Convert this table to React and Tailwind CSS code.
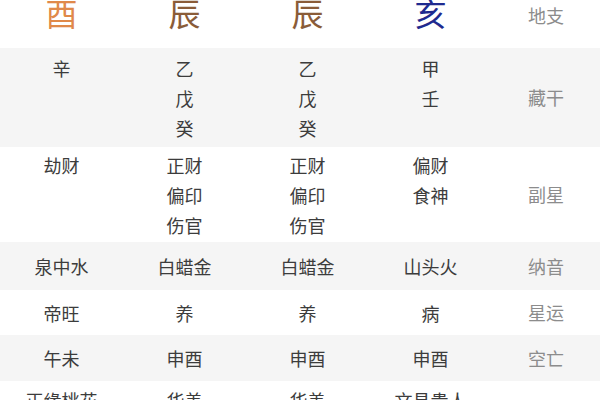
const FONT = { fontFamily: '"Noto Sans CJK SC", "Noto Sans", sans-serif' };

const cols = 'grid grid-cols-[123px_123px_123px_123px_108px]';

const rows = [
  {
    label: '藏干',
    cls: 'h-[99px] bg-[#f5f5f5]',
    pad: 'pt-[5px]',
    cells: [['辛'], ['乙', '戊', '癸'], ['乙', '戊', '癸'], ['甲', '壬']],
  },
  {
    label: '副星',
    cls: 'h-[95px] bg-white',
    pad: 'pt-[3px]',
    cells: [['劫财'], ['正财', '偏印', '伤官'], ['正财', '偏印', '伤官'], ['偏财', '食神']],
  },
  {
    label: '纳音',
    cls: 'h-[48px] bg-[#f5f5f5]',
    pad: 'pt-[9px]',
    cells: [['泉中水'], ['白蜡金'], ['白蜡金'], ['山头火']],
  },
  {
    label: '星运',
    cls: 'h-[45px] bg-white',
    pad: 'pt-[8px]',
    cells: [['帝旺'], ['养'], ['养'], ['病']],
  },
  {
    label: '空亡',
    cls: 'h-[46px] bg-[#f5f5f5]',
    pad: 'pt-[8px]',
    cells: [['午未'], ['申酉'], ['申酉'], ['申酉']],
  },
  {
    label: '神煞',
    cls: 'h-[98px] bg-white',
    pad: 'pt-[4px]',
    cells: [['正缘桃花', '将星'], ['华盖'], ['华盖'], ['文昌贵人', '天乙贵人']],
  },
];

const branches = [
  { ch: '酉', color: 'text-[#e0894a]' },
  { ch: '辰', color: 'text-[#8a5c38]' },
  { ch: '辰', color: 'text-[#8a5c38]' },
  { ch: '亥', color: 'text-[#1f2a8f]' },
];

export default function App() {
  return (
    <div className="w-[600px] h-[400px] overflow-hidden bg-white" style={FONT}>
      {/* 地支 header, top clipped like the source */}
      <div className={`${cols} h-[48px] bg-white`}>
        {branches.map((b, i) => (
          <div key={i} className={`-mt-[3px] text-center text-[32px] leading-[30px] h-[30px] ${b.color}`}>
            {b.ch}
          </div>
        ))}
        <div className="text-center text-[18px] leading-[30px] text-[#8c8c8c]">地支</div>
      </div>

      {rows.map(row => (
        <div key={row.label} className={`${cols} ${row.cls}`}>
          {row.cells.map((lines, i) => (
            <div
              key={i}
              className={`flex flex-col items-center text-[18px] leading-[30px] text-[#3c3c3c] ${row.pad}`}
            >
              {lines.map((t, j) => (
                <span key={j}>{t}</span>
              ))}
            </div>
          ))}
          <div className="flex items-center justify-center text-[18px] text-[#8c8c8c]">
            {row.label}
          </div>
        </div>
      ))}
    </div>
  );
}
